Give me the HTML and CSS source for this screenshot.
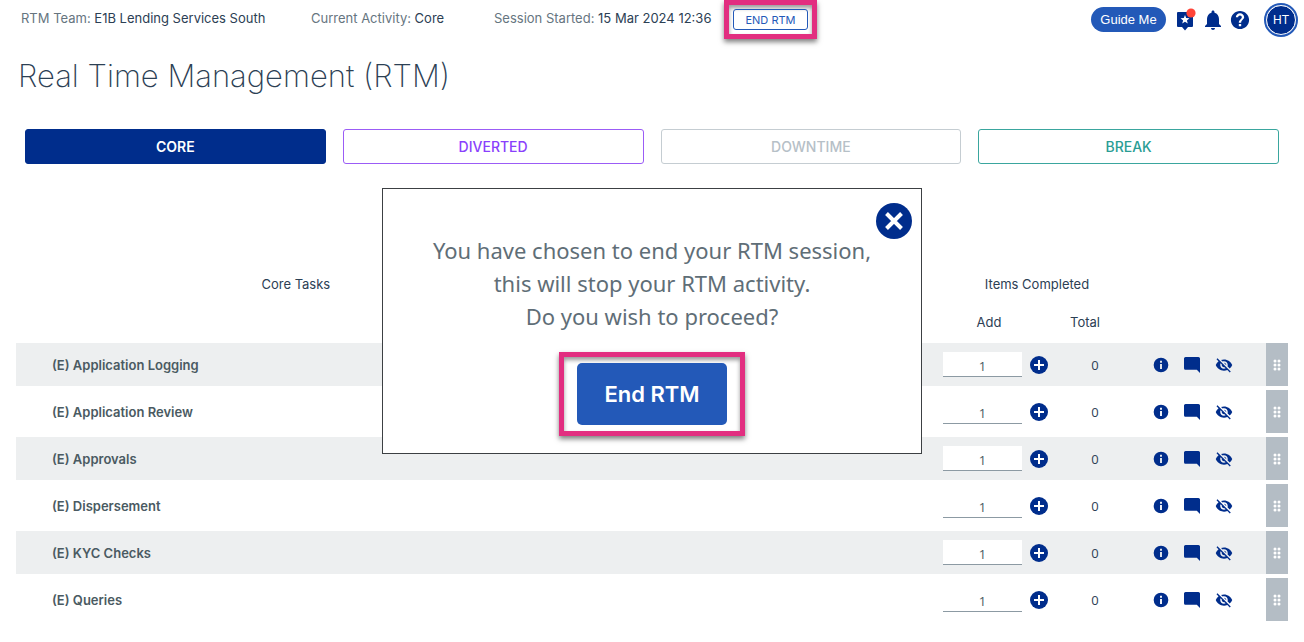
FILE: index.html
```html
<!DOCTYPE html>
<html lang="en">
<head>
    <meta charset="UTF-8">
    <meta name="viewport" content="width=device-width, initial-scale=1.0">
    <title>Real Time Management (RTM)</title>
    <link rel="stylesheet" href="styles.css">
</head>
<body>
    <!-- Shared icons -->
    <svg class="icon-defs" aria-hidden="true">
        <symbol id="i-plus" viewBox="0 0 20 20">
            <circle cx="10" cy="10" r="9"/>
            <path d="M10 5v10M5 10h10" stroke="#fff" stroke-width="2"/>
        </symbol>
        <symbol id="i-info" viewBox="0 0 24 24">
            <path d="M12 1a11 11 0 1 0 0 22 11 11 0 0 0 0-22zm1.400 17h-2.800v-7.500h2.800zm0-9.500h-2.800V5.700h2.800z"/>
        </symbol>
        <symbol id="i-chat" viewBox="2 2 20 20">
            <path d="M22 4c0-1.100-.9-2-2-2H4c-1.100 0-2 .9-2 2v12c0 1.100.9 2 2 2h14l4 4z"/>
        </symbol>
        <symbol id="i-hide" viewBox="0 0 24 24">
            <path d="M12 7c2.760 0 5 2.240 5 5 0 .65-.13 1.260-.36 1.830l2.920 2.920c1.510-1.260 2.700-2.890 3.430-4.750-1.730-4.390-6-7.500-11-7.500-1.400 0-2.740.25-3.980.7l2.160 2.160C10.740 7.130 11.350 7 12 7zM2 4.270l2.280 2.280.46.46C3.080 8.300 1.780 10.020 1 12c1.730 4.390 6 7.500 11 7.500 1.550 0 3.030-.3 4.380-.84l.42.42L19.730 22 21 20.730 3.270 3 2 4.270zM7.530 9.800l1.550 1.550c-.05.21-.08.43-.08.65 0 1.660 1.340 3 3 3 .22 0 .44-.03.65-.08l1.550 1.550c-.67.33-1.410.53-2.200.53-2.760 0-5-2.240-5-5 0-.79.2-1.530.53-2.200zm4.310-.78l3.150 3.150.02-.16c0-1.660-1.340-3-3-3l-.17.01z"/>
        </symbol>
        <symbol id="i-drag" viewBox="0 0 8 12">
            <circle cx="2" cy="2" r="1.500"/><circle cx="6" cy="2" r="1.500"/>
            <circle cx="2" cy="6" r="1.500"/><circle cx="6" cy="6" r="1.500"/>
            <circle cx="2" cy="10" r="1.500"/><circle cx="6" cy="10" r="1.500"/>
        </symbol>
    </svg>

    <header class="topbar">
        <p class="status status-team">RTM Team: <span>E1B Lending Services South</span></p>
        <p class="status">Current Activity: <span>Core</span></p>
        <p class="status">Session Started: <span>15 Mar 2024 12:36</span></p>
        <div class="highlight highlight-small">
            <button type="button" class="end-link">END RTM</button>
        </div>
        <nav class="tools">
            <button type="button" class="guide">Guide Me</button>
            <button type="button" class="tool" aria-label="What's new">
                <svg width="22" height="24" viewBox="0 0 22 24">
                    <path d="M4 4h14a1 1 0 0 1 1 1v13a1 1 0 0 1-1 1h-4l-3 3.500L8 19H4a1 1 0 0 1-1-1V5a1 1 0 0 1 1-1z"/>
                    <path fill="#fff" d="M11 7l1.200 3.100 3.300.2-2.600 2.100.9 3.200-2.800-1.800-2.800 1.800.9-3.200-2.600-2.100 3.300-.2z"/>
                    <circle cx="17" cy="5" r="4.600" fill="#ff4438"/>
                </svg>
            </button>
            <button type="button" class="tool" aria-label="Notifications">
                <svg width="16" height="20" viewBox="4 2 16 20">
                    <path d="M12 22c1.100 0 2-.9 2-2h-4c0 1.100.9 2 2 2zm6-6v-5c0-3.070-1.640-5.640-4.500-6.320V4c0-.83-.67-1.500-1.500-1.500s-1.500.67-1.500 1.500v.68C7.630 5.360 6 7.920 6 11v5l-2 2v1h16v-1l-2-2z"/>
                </svg>
            </button>
            <button type="button" class="tool" aria-label="Help">
                <svg width="20" height="20" viewBox="1 1 22 22">
                    <path d="M12 2C6.480 2 2 6.480 2 12s4.480 10 10 10 10-4.480 10-10S17.520 2 12 2zm1.300 17h-2.600v-2.600h2.600V19zm2.070-7.750l-.9.920c-.72.730-1.170 1.330-1.170 2.830h-2.600v-.5c0-1.100.75-2.100 1.470-2.830l1.240-1.260c.37-.36.59-.86.59-1.410 0-1.100-.9-2-2-2s-2 .9-2 2H7.400C7.400 6.500 9.500 4.500 12 4.500s4.600 2 4.600 4.500c0 .88-.66 1.680-1.230 2.250z"/>
                </svg>
            </button>
            <button type="button" class="avatar">HT</button>
        </nav>
    </header>

    <main>
        <h1>Real Time Management (RTM)</h1>

        <div class="tabs">
            <button type="button" class="tab tab-core">CORE</button>
            <button type="button" class="tab tab-diverted">DIVERTED</button>
            <button type="button" class="tab tab-downtime">DOWNTIME</button>
            <button type="button" class="tab tab-break">BREAK</button>
        </div>

        <table class="tasks">
            <colgroup>
                <col class="col-task">
                <col>
                <col class="col-add">
                <col class="col-total">
                <col class="col-actions">
                <col class="col-drag">
            </colgroup>
            <thead>
                <tr>
                    <th>Core Tasks</th>
                    <th></th>
                    <th colspan="2" class="items">Items Completed</th>
                    <th colspan="2"></th>
                </tr>
                <tr>
                    <th colspan="2"></th>
                    <th>Add</th>
                    <th>Total</th>
                    <th colspan="2"></th>
                </tr>
            </thead>
            <tbody>
                <tr>
                    <td class="name" colspan="2">(E) Application Logging</td>
                    <td><div class="add"><input type="text" value="1" aria-label="Application Logging items"><button type="button" aria-label="Add"><svg width="20" height="20"><use href="#i-plus"/></svg></button></div></td>
                    <td class="total">0</td>
                    <td><div class="actions">
                        <button type="button" aria-label="Info"><svg width="16" height="16"><use href="#i-info"/></svg></button>
                        <button type="button" aria-label="Comment"><svg width="16" height="16"><use href="#i-chat"/></svg></button>
                        <button type="button" aria-label="Hide"><svg width="18" height="18"><use href="#i-hide"/></svg></button>
                    </div></td>
                    <td class="drag"><svg width="8" height="12"><use href="#i-drag"/></svg></td>
                </tr>
                <tr>
                    <td class="name" colspan="2">(E) Application Review</td>
                    <td><div class="add"><input type="text" value="1" aria-label="Application Review items"><button type="button" aria-label="Add"><svg width="20" height="20"><use href="#i-plus"/></svg></button></div></td>
                    <td class="total">0</td>
                    <td><div class="actions">
                        <button type="button" aria-label="Info"><svg width="16" height="16"><use href="#i-info"/></svg></button>
                        <button type="button" aria-label="Comment"><svg width="16" height="16"><use href="#i-chat"/></svg></button>
                        <button type="button" aria-label="Hide"><svg width="18" height="18"><use href="#i-hide"/></svg></button>
                    </div></td>
                    <td class="drag"><svg width="8" height="12"><use href="#i-drag"/></svg></td>
                </tr>
                <tr>
                    <td class="name" colspan="2">(E) Approvals</td>
                    <td><div class="add"><input type="text" value="1" aria-label="Approvals items"><button type="button" aria-label="Add"><svg width="20" height="20"><use href="#i-plus"/></svg></button></div></td>
                    <td class="total">0</td>
                    <td><div class="actions">
                        <button type="button" aria-label="Info"><svg width="16" height="16"><use href="#i-info"/></svg></button>
                        <button type="button" aria-label="Comment"><svg width="16" height="16"><use href="#i-chat"/></svg></button>
                        <button type="button" aria-label="Hide"><svg width="18" height="18"><use href="#i-hide"/></svg></button>
                    </div></td>
                    <td class="drag"><svg width="8" height="12"><use href="#i-drag"/></svg></td>
                </tr>
                <tr>
                    <td class="name" colspan="2">(E) Dispersement</td>
                    <td><div class="add"><input type="text" value="1" aria-label="Dispersement items"><button type="button" aria-label="Add"><svg width="20" height="20"><use href="#i-plus"/></svg></button></div></td>
                    <td class="total">0</td>
                    <td><div class="actions">
                        <button type="button" aria-label="Info"><svg width="16" height="16"><use href="#i-info"/></svg></button>
                        <button type="button" aria-label="Comment"><svg width="16" height="16"><use href="#i-chat"/></svg></button>
                        <button type="button" aria-label="Hide"><svg width="18" height="18"><use href="#i-hide"/></svg></button>
                    </div></td>
                    <td class="drag"><svg width="8" height="12"><use href="#i-drag"/></svg></td>
                </tr>
                <tr>
                    <td class="name" colspan="2">(E) KYC Checks</td>
                    <td><div class="add"><input type="text" value="1" aria-label="KYC Checks items"><button type="button" aria-label="Add"><svg width="20" height="20"><use href="#i-plus"/></svg></button></div></td>
                    <td class="total">0</td>
                    <td><div class="actions">
                        <button type="button" aria-label="Info"><svg width="16" height="16"><use href="#i-info"/></svg></button>
                        <button type="button" aria-label="Comment"><svg width="16" height="16"><use href="#i-chat"/></svg></button>
                        <button type="button" aria-label="Hide"><svg width="18" height="18"><use href="#i-hide"/></svg></button>
                    </div></td>
                    <td class="drag"><svg width="8" height="12"><use href="#i-drag"/></svg></td>
                </tr>
                <tr>
                    <td class="name" colspan="2">(E) Queries</td>
                    <td><div class="add"><input type="text" value="1" aria-label="Queries items"><button type="button" aria-label="Add"><svg width="20" height="20"><use href="#i-plus"/></svg></button></div></td>
                    <td class="total">0</td>
                    <td><div class="actions">
                        <button type="button" aria-label="Info"><svg width="16" height="16"><use href="#i-info"/></svg></button>
                        <button type="button" aria-label="Comment"><svg width="16" height="16"><use href="#i-chat"/></svg></button>
                        <button type="button" aria-label="Hide"><svg width="18" height="18"><use href="#i-hide"/></svg></button>
                    </div></td>
                    <td class="drag"><svg width="8" height="12"><use href="#i-drag"/></svg></td>
                </tr>
            </tbody>
        </table>
    </main>

    <div class="modal" role="dialog" aria-labelledby="modalText">
        <button type="button" class="close" aria-label="Close">
            <svg width="36" height="36" viewBox="0 0 36 36">
                <circle cx="18" cy="18" r="18"/>
                <path d="M10.500 10.500l15 15M25.500 10.500l-15 15" stroke="#fff" stroke-width="4"/>
            </svg>
        </button>
        <p id="modalText">You have chosen to end your RTM session,<br>this will stop your RTM activity.<br>Do you wish to proceed?</p>
        <div class="highlight highlight-large">
            <button type="button" class="end-button">End RTM</button>
        </div>
    </div>
</body>
</html>
```
FILE: styles.css
```css
* {
    box-sizing: border-box;
}
body {
    margin: 0;
    position: relative;
    font-family: Inter, "Open Sans", sans-serif;
    font-size: 13px;
    color: #2c4054;
    background-color: #fff;
}
p, h1 {
    margin: 0;
}
button {
    padding: 0;
    border: none;
    background: none;
    font-family: inherit;
    cursor: pointer;
}
svg {
    display: block;
    fill: #002d8c;
}
.icon-defs {
    display: none;
}

/* Top bar */
.topbar {
    display: flex;
    align-items: center;
    height: 39px;
    padding: 0 8px 0 21px;
}
.status {
    width: 183px;
    padding-bottom: 3px;
    color: #66757f;
    white-space: nowrap;
}
.status-team {
    width: 290px;
}
.status span {
    color: #2c4054;
}
.status + .highlight {
    margin-left: 47px;
}
.highlight {
    border: 5px solid #e22e80;
    box-shadow: 0 3px 5px rgba(0,0,0,0.5), inset 0 3px 4px rgba(0,0,0,0.4);
}
.highlight-small {
    padding: 4px;
}
.end-link {
    display: block;
    width: 75px;
    height: 21px;
    border: 1px solid #2359b8;
    border-radius: 3px;
    font-size: 11px;
    color: #2359b8;
}
.tools {
    display: flex;
    align-items: center;
    margin-left: auto;
}
.guide {
    width: 75px;
    height: 25px;
    margin-right: 8px;
    border-radius: 13px;
    font-family: "Liberation Sans", Arial, sans-serif;
    font-size: 13px;
    color: #fff;
    background-color: #2359b8;
}
.tool {
    margin-right: 9px;
}
.avatar {
    width: 30px;
    height: 30px;
    margin-left: 7px;
    border: 1px solid #fff;
    border-radius: 50%;
    outline: 2px solid #2359b8;
    font-family: "Liberation Sans", Arial, sans-serif;
    font-size: 12px;
    color: #fff;
    background-color: #002d8c;
}

/* Page title and activity tabs */
h1 {
    padding: 17px 18px 0;
    font-size: 31px;
    font-weight: 200;
    line-height: 40px;
}
.tabs {
    display: grid;
    grid-template-columns: repeat(4, 1fr);
    gap: 17px;
    padding: 33px 25px 0;
}
.tab {
    height: 35px;
    border: 1px solid;
    border-radius: 3px;
    font-size: 14px;
    font-weight: 500;
}
.tab-core {
    border-color: #002d8c;
    font-weight: 600;
    color: #fff;
    background-color: #002d8c;
}
.tab-diverted {
    border-color: #9b5cf6;
    color: #8a3ffc;
}
.tab-downtime {
    border-color: #c5cdd2;
    color: #b6c0c7;
}
.tab-break {
    border-color: #3aa69e;
    color: #2a9d94;
}

/* Tasks */
main {
    padding-bottom: 16px;
}
.tasks {
    width: calc(100% - 32px);
    margin: 99px 16px 0;
    table-layout: fixed;
    border-collapse: separate;
    border-spacing: 0 4px;
}
.col-task {
    width: 44%;
}
.col-add {
    width: 120px;
}
.col-total {
    width: 72px;
}
.col-actions {
    width: 145px;
}
.col-drag {
    width: 22px;
}
th {
    height: 34px;
    padding: 0;
    font-weight: 400;
}
.items {
    padding-left: 24px;
}
td {
    height: 43px;
    padding: 0;
}
tbody tr:nth-child(odd) td {
    background-color: #edeff0;
}
.name {
    padding-left: 36px;
    font-weight: 600;
    color: #4a5a62;
}
.add {
    display: flex;
    align-items: center;
    gap: 7px;
    padding-left: 14px;
}
.add input {
    width: 79px;
    height: 25px;
    padding: 3px 0 0;
    border: none;
    border-bottom: 1px solid #8c9aa3;
    border-radius: 0;
    font-family: "Open Sans", sans-serif;
    font-size: 13px;
    text-align: center;
    color: #4a5a62;
    background-color: #fff;
}
.total {
    padding-left: 20px;
    font-family: "Open Sans", sans-serif;
    text-align: center;
}
.actions {
    display: flex;
    align-items: center;
    gap: 15px;
    padding-left: 32px;
}
tbody tr .drag,
tbody tr:nth-child(odd) .drag {
    padding-left: 7px;
    background-color: #b4bdc5;
}
.drag svg {
    fill: #fff;
}

/* Confirmation box */
.modal {
    position: absolute;
    top: 188px;
    left: 0;
    right: 0;
    width: 540px;
    max-width: 100%;
    margin: 0 auto;
    padding: 45px 0 17px;
    border: 1px solid #3c4043;
    background-color: #fff;
    font-family: "Noto Sans", "Open Sans", sans-serif;
    font-size: 22px;
    line-height: 33px;
    text-align: center;
    color: #5f6e77;
}
.close {
    position: absolute;
    top: 14px;
    right: 9px;
}
.highlight-large {
    width: 186px;
    margin: 19px auto 0;
    padding: 6px 13px;
}
.end-button {
    display: block;
    width: 100%;
    height: 62px;
    border-radius: 5px;
    font-family: Inter, "Open Sans", sans-serif;
    font-size: 22px;
    font-weight: 600;
    color: #fff;
    background-color: #2359b8;
}
```
